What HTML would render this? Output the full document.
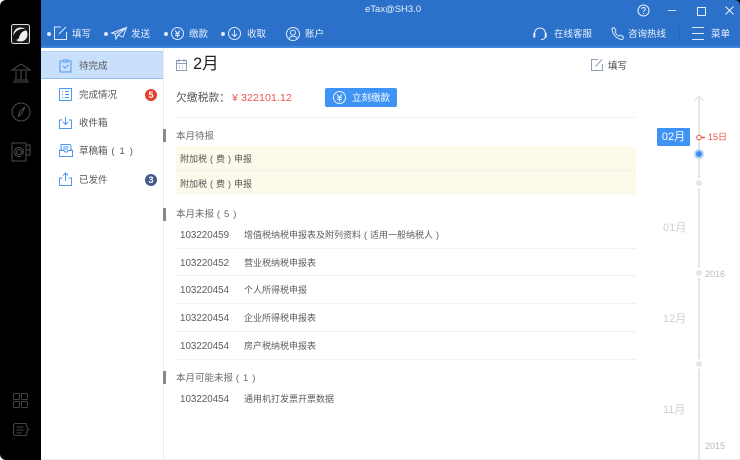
<!DOCTYPE html>
<html lang="zh"><head><meta charset="utf-8">
<style>
html,body{margin:0;padding:0;background:#fff}
body{width:740px;height:460px;overflow:hidden;position:relative;font-family:"Liberation Sans","Noto Sans CJK SC",sans-serif;font-size:9.5px;color:#555}
.t{position:absolute;white-space:nowrap;line-height:14px}
.w{color:#e8f0fb}
.b{position:absolute}
svg{position:absolute;overflow:visible;fill:none}
i{font-style:normal;display:inline-block;text-align:center;width:9px}
.row{position:absolute;left:176px;width:460px;height:1px;background:#eef2f8}
.code{left:180px;color:#5c5c5c;font-size:9.8px}
.nm{left:244px;color:#5c5c5c;font-size:9px}
.sec{left:176px;color:#6a6a6a}
.bar{position:absolute;left:163px;width:3px;height:13px;background:#8a8a8a}
.dot{position:absolute;width:4px;height:4px;border-radius:50%;background:#dce9fa;top:32px}
.mon{position:absolute;color:#cfcfcf;font-size:11px;left:663px;line-height:14px}
.yr{position:absolute;color:#bbb;font-size:9px;left:705px;line-height:12px}
.pt{position:absolute;left:696px;width:6px;height:6px;border-radius:50%;background:#e6e6e6;box-shadow:0 0 0 2px #fff}
</style></head><body>
<div class="b" style="left:700px;top:0;width:40px;height:20px;background:#000"></div>
<div class="b" style="left:41px;top:0;width:699px;height:47px;background:#2b70c9;border-top-right-radius:5px"></div>
<div class="b" style="left:41px;top:46px;width:699px;height:2px;background:#3a85e0"></div>
<div class="b" style="left:0;top:0;width:41px;height:460px;background:#000;border-radius:6px 0 0 6px"></div>
<div class="b" style="left:163px;top:48px;width:1px;height:412px;background:#ececec"></div>
<div class="b" style="left:41px;top:459px;width:699px;height:1px;background:#ececec"></div>

<!-- logo -->
<svg style="left:11px;top:24px" width="20" height="20" viewBox="0 0 20 20"><rect x=".5" y=".5" width="18" height="19" rx="2" fill="#1a1a1a" stroke="#ddd"/><circle cx="9.500" cy="10.500" r="7" fill="#eee"/><path d="M2 14C3 6 10 3 18 6 12 6 9 9 8 14c-2 3-5 2-6 0z" fill="#111"/></svg>
<!-- left rail icons -->
<svg style="left:11px;top:63px" width="20" height="20" viewBox="0 0 20 20" stroke="#4d4d4d"><path d="M1 7 10 1l9 6zM2 19h16M3 17h14M5 8v8M10 8v8M15 8v8"/></svg>
<svg style="left:11px;top:101px" width="20" height="20" viewBox="0 0 20 20" stroke="#4d4d4d"><circle cx="10" cy="11" r="9"/><path d="m14 6-3 6-4 4 2-6z"/></svg>
<svg style="left:11px;top:142px" width="20" height="20" viewBox="0 0 20 20" stroke="#4d4d4d"><path d="M1 1h14v18H1zM15 3h4v5h-4M15 8h4v5h-4"/><circle cx="8" cy="10" r="2.500"/><path d="M10.500 8v3.500c1 1 2 0 2-1.500a4.500 4.500 0 1 0-2 3.700"/></svg>
<svg style="left:13px;top:393px" width="16" height="16" viewBox="0 0 16 16" stroke="#454545"><rect x=".5" y=".5" width="6" height="6" rx="1"/><rect x="8.500" y=".5" width="6" height="6" rx="1"/><rect x=".5" y="8.500" width="6" height="6" rx="1"/><rect x="8.500" y="8.500" width="6" height="6" rx="1"/></svg>
<svg style="left:13px;top:423px" width="18" height="13" viewBox="0 0 18 13" stroke="#454545"><path d="M2 .5h11l1 4 2 2-2 1v3l-1 2H2l-1.500-1V2zM3.500 4h7M3.500 7h8M3.500 10h5"/></svg>

<!-- title bar -->
<div class="t w" style="left:365px;top:3px;font-size:9.500px">eTax@SH3.0</div>
<svg style="left:637px;top:4px" width="13" height="13" viewBox="0 0 13 13" stroke="#e8f0fb"><circle cx="6.500" cy="6.500" r="5.500"/><path d="M4.800 5.200c0-2.200 3.500-2.200 3.500 0 0 1.300-1.800 1.300-1.800 2.800M6.500 9v1"/></svg>
<div class="b" style="left:668px;top:10px;width:8px;height:1px;background:#cfe0f5"></div>
<div class="b" style="left:697px;top:7px;width:7px;height:7px;border:1px solid #e8f0fb"></div>
<svg style="left:725px;top:6px" width="9" height="9" viewBox="0 0 9 9" stroke="#e8f0fb"><path d="m.5.5 8 8M8.500.5l-8 8"/></svg>

<!-- toolbar -->
<div class="dot" style="left:47px"></div>
<svg style="left:54px;top:26px" width="13" height="14" viewBox="0 0 13 14" stroke="#dce9fa"><path d="M7 1H.5v12.500h12V6M5 8l7-7"/></svg>
<div class="t w" style="left:72px;top:28px">填写</div>
<div class="dot" style="left:104px"></div>
<svg style="left:111px;top:27px" width="16" height="13" viewBox="0 0 16 13" stroke="#dce9fa"><path d="M.5 6 15.500.5 12 10 7 8l-2 4-1-5zM15.500.5 4 7M15.500.5 7 8"/></svg>
<div class="t w" style="left:131px;top:28px">发送</div>
<div class="dot" style="left:164px"></div>
<svg style="left:171px;top:27px" width="13" height="13" viewBox="0 0 13 13" stroke="#dce9fa"><circle cx="6.500" cy="6.500" r="6"/><path d="m4 3.500 2.500 3 2.500-3M6.500 6.500V10.500M4.200 6.800h4.600M4.200 8.500h4.600"/></svg>
<div class="t w" style="left:189px;top:28px">缴款</div>
<div class="dot" style="left:221px"></div>
<svg style="left:228px;top:27px" width="13" height="13" viewBox="0 0 13 13" stroke="#dce9fa"><circle cx="6.500" cy="6.500" r="6"/><path d="M6.500 3v6.500M3.800 7l2.700 2.700L9.200 7"/></svg>
<div class="t w" style="left:247px;top:28px">收取</div>
<svg style="left:286px;top:27px" width="14" height="14" viewBox="0 0 14 14" stroke="#dce9fa"><circle cx="7" cy="7" r="6.500"/><circle cx="7" cy="5.500" r="2.500"/><path d="M3 11.500c1-3 7-3 8 0"/></svg>
<div class="t w" style="left:305px;top:28px">账户</div>
<svg style="left:533px;top:27px" width="14" height="14" viewBox="0 0 14 14" stroke="#e8f0fb"><path d="M1.500 9V6.500a5.500 5.500 0 0 1 11 0V9M12.500 9c0 2.500-2 3.500-4.500 3.500"/><rect x=".8" y="6.500" width="1" height="3.500" fill="#e8f0fb"/><rect x="12.200" y="6.500" width="1" height="3.500" fill="#e8f0fb"/></svg>
<div class="t w" style="left:554px;top:28px">在线客服</div>
<svg style="left:611px;top:27px" width="13" height="13" viewBox="0 0 13 13" stroke="#dce9fa"><path d="M1 1.500 3 .5l2 3-1 1.500c.8 2 2 3 4 4l1.500-1 3 2-1 2.500C6 12.500 1 7 1 1.500z"/></svg>
<div class="t w" style="left:628px;top:28px">咨询热线</div>
<div class="b" style="left:679px;top:26px;width:1px;height:15px;background:#2a66b8"></div>
<div class="b" style="left:692px;top:27px;width:12px;height:1px;background:#dce9fa"></div>
<div class="b" style="left:692px;top:33px;width:12px;height:1px;background:#dce9fa"></div>
<div class="b" style="left:692px;top:39px;width:12px;height:1px;background:#dce9fa"></div>
<div class="t w" style="left:711px;top:28px">菜单</div>

<!-- sidebar -->
<div class="b" style="left:41px;top:51px;width:122px;height:28px;background:#c9e0fc"></div>
<div class="b" style="left:41px;top:78px;width:122px;height:1px;background:#8fbdf3"></div>
<div class="b" style="left:41px;top:51px;width:122px;height:1px;background:#b0d2fa"></div>
<svg style="left:59px;top:59px" width="14" height="14" viewBox="0 0 14 14" stroke="#4a98f0"><path d="M3 2H1v11h11V2h-2M4 1h5v2H4zM4 7l2 2 3.500-3"/></svg>
<div class="t" style="left:79px;top:60px">待完成</div>
<svg style="left:59px;top:88px" width="13" height="13" viewBox="0 0 13 13" stroke="#4a98f0"><rect x=".5" y=".5" width="12" height="12"/><path d="M3 3.500h1M6 3.500h4M3 6.500h1M6 6.500h4M3 9.500h1M6 9.500h4"/></svg>
<div class="t" style="left:79px;top:89px">完成情况</div>
<div class="b" style="left:145px;top:89px;width:12px;height:12px;border-radius:50%;background:#e53f2d;color:#fff;font-size:9px;font-weight:bold;line-height:12px;text-align:center">5</div>
<svg style="left:59px;top:116px" width="13" height="13" viewBox="0 0 13 13" stroke="#4a98f0"><path d="M3.500 4H.5v8.500h12V4h-3M6.500 1v7M4 6l2.500 2.500L9 6"/></svg>
<div class="t" style="left:79px;top:117px">收件箱</div>
<svg style="left:59px;top:144px" width="14" height="13" viewBox="0 0 14 13" stroke="#4a98f0"><path d="M2 6V.5h9l1 1.500V6M4 3h6M4 5h5M.5 6.500 3 5M13.500 6.500 11 5M.5 6.500v6h13v-6H9l-1 1.500H6L5 6.500z"/></svg>
<div class="t" style="left:79px;top:145px">草稿箱<i style="margin-left:1px">(</i><span style="margin:0 2px">1</span><i>)</i></div>
<svg style="left:59px;top:172px" width="13" height="14" viewBox="0 0 13 14" stroke="#4a98f0"><path d="M3.500 6H.5v7.500h12V6h-3M6.500 9V1M4 3.500 6.500 1 9 3.500"/></svg>
<div class="t" style="left:79px;top:174px">已发件</div>
<div class="b" style="left:145px;top:174px;width:12px;height:12px;border-radius:50%;background:#45598c;color:#fff;font-size:9px;font-weight:bold;line-height:12px;text-align:center">3</div>

<!-- header -->
<svg style="left:176px;top:59px" width="12" height="12" viewBox="0 0 12 12" stroke="#8e9db5"><rect x=".5" y="1.500" width="10" height="10"/><path d="M3 0v3M8 0v3M.5 4.500h10M3 7h1M6 7h1M3 9h1M6 9h1"/></svg>
<div class="t" style="left:193px;top:53px;font-size:16.500px;line-height:22px;color:#222">2月</div>
<svg style="left:591px;top:59px" width="12" height="12" viewBox="0 0 12 12" stroke="#8e9db5"><path d="M7 .5H.5v11h11V5M4.500 7.500l6.500-7"/></svg>
<div class="t" style="left:608px;top:60px;color:#444">填写</div>

<div class="t" style="left:176px;top:90px;font-size:10.800px;line-height:16px;color:#555">欠缴税款：</div>
<div class="t" style="left:232px;top:90px;font-size:10.500px;line-height:16px;color:#e9534a">¥</div>
<div class="t" style="left:241px;top:90px;font-size:10.500px;line-height:16px;color:#e9534a;letter-spacing:.15px">322101.12</div>
<div class="b" style="left:325px;top:88px;width:72px;height:19px;border-radius:2px;background:#3f93f5"></div>
<svg style="left:333px;top:91px" width="13" height="13" viewBox="0 0 13 13" stroke="#e8f2fe"><circle cx="6.500" cy="6.500" r="6"/><path d="m4 3.500 2.500 3 2.500-3M6.500 6.500V10.500M4.200 6.800h4.600M4.200 8.500h4.600"/></svg>
<div class="t" style="left:352px;top:92px;color:#fff">立刻缴款</div>
<div class="row" style="top:117px"></div>

<!-- section 1 -->
<div class="bar" style="top:129px"></div>
<div class="t sec" style="top:130px">本月待报</div>
<div class="b" style="left:176px;top:146px;width:460px;height:24px;background:#fcfaeb"></div>
<div class="b" style="left:176px;top:170px;width:460px;height:1px;background:#eff2e6"></div>
<div class="b" style="left:176px;top:171px;width:460px;height:24px;background:#fcfaeb"></div>
<div class="t" style="left:180px;top:152px;font-size:9px">附加税<i>(</i>费<i>)</i>申报</div>
<div class="t" style="left:180px;top:177px;font-size:9px">附加税<i>(</i>费<i>)</i>申报</div>

<!-- section 2 -->
<div class="bar" style="top:208px"></div>
<div class="t sec" style="top:208px">本月未报<i>(</i><span style="margin:0 1px">5</span><i>)</i></div>
<div class="t code" style="top:229px">103220459</div><div class="t nm" style="top:228px">增值税纳税申报表及附列资料<i>(</i>适用一般纳税人<i>)</i></div>
<div class="row" style="top:248px"></div>
<div class="t code" style="top:257px">103220452</div><div class="t nm" style="top:256px">营业税纳税申报表</div>
<div class="row" style="top:275px"></div>
<div class="t code" style="top:284px">103220454</div><div class="t nm" style="top:283px">个人所得税申报</div>
<div class="row" style="top:303px"></div>
<div class="t code" style="top:312px">103220454</div><div class="t nm" style="top:311px">企业所得税申报表</div>
<div class="row" style="top:331px"></div>
<div class="t code" style="top:340px">103220454</div><div class="t nm" style="top:339px">房产税纳税申报表</div>
<div class="row" style="top:359px"></div>

<!-- section 3 -->
<div class="bar" style="top:371px"></div>
<div class="t sec" style="top:372px">本月可能未报<i>(</i><span style="margin:0 1px">1</span><i>)</i></div>
<div class="t code" style="top:393px">103220454</div><div class="t nm" style="top:392px">通用机打发票开票数据</div>

<!-- timeline -->
<div class="b" style="left:698px;top:96px;width:2px;height:364px;background:#e6e6e6"></div>
<svg style="left:694px;top:95px" width="10" height="7" viewBox="0 0 10 7" stroke="#e0e0e0"><path d="m.5 6 4.500-5 4.500 5"/></svg>
<div class="b" style="left:657px;top:128px;width:33px;height:18px;border-radius:1px;background:#3f93f5;color:#fff;font-size:11px;line-height:18px;text-align:center">02月</div>
<svg style="left:696px;top:134px" width="10" height="7" viewBox="0 0 10 7" stroke="#e9534a"><circle cx="3" cy="3.500" r="2.300" fill="#fff"/><path d="M5.500 3.500h3.500" stroke-width="1.500"/></svg>
<div class="t" style="left:708px;top:130px;color:#e9534a;font-size:9px">15日</div>
<div class="b" style="left:694px;top:149px;width:10px;height:10px;border-radius:50%;background:#bcd3f3"></div>
<div class="b" style="left:696px;top:151px;width:6px;height:6px;border-radius:50%;background:#3f8ff0"></div>
<div class="pt" style="top:180px"></div>
<div class="mon" style="top:221px">01月</div>
<div class="pt" style="top:270px"></div>
<div class="yr" style="top:268px">2016</div>
<div class="mon" style="top:312px">12月</div>
<div class="pt" style="top:361px"></div>
<div class="mon" style="top:403px">11月</div>
<div class="yr" style="top:440px">2015</div>
</body></html>
